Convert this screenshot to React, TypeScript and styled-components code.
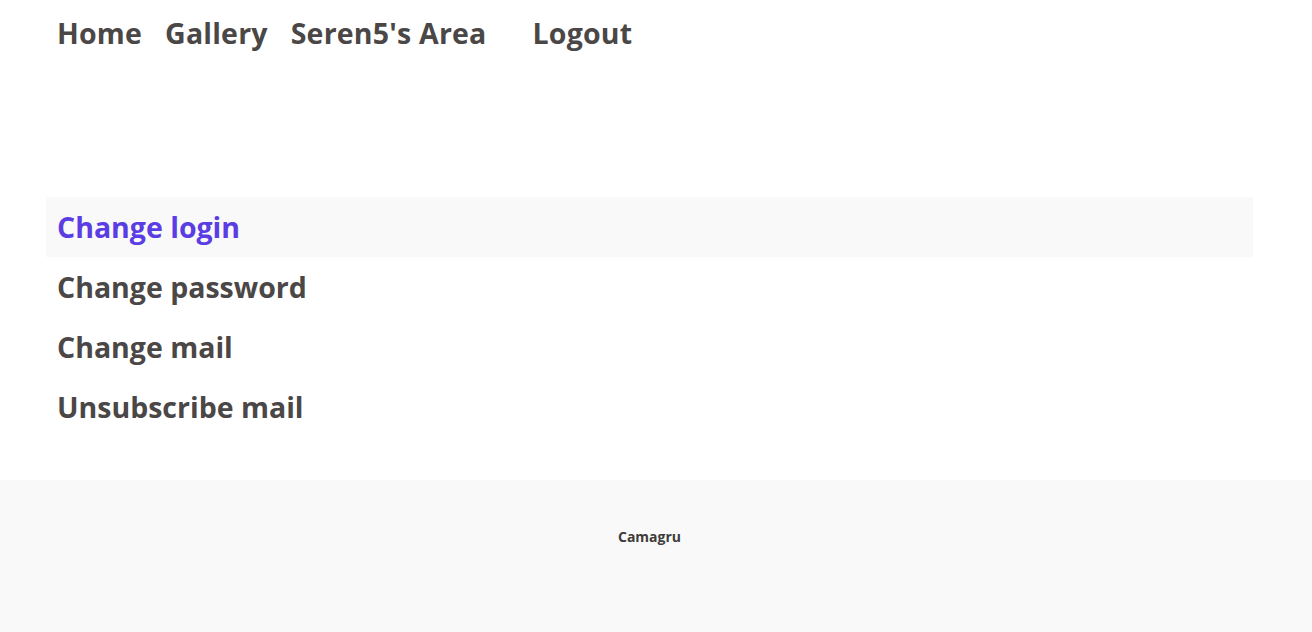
import React from "react";
import styled, { createGlobalStyle } from "styled-components";

const GlobalStyle = createGlobalStyle`
  html, body {
    margin: 0;
    padding: 0;
    background: #ffffff;
    font-family: "Open Sans", "Noto Sans", sans-serif;
    color: #4a4746;
  }
`;

const navLinks = ["Home", "Gallery", "Seren5's Area", "", "Logout"];
const settings = ["Change login", "Change password", "Change mail", "Unsubscribe mail"];

export default function App() {
  const active = 0;

  return (
    <>
      <GlobalStyle />
      <Page>
        <Nav>
          {navLinks.map((label, index) => (
            <NavItem key={index}>{label}</NavItem>
          ))}
        </Nav>

        <Main>
          <SettingsList>
            {settings.map((label, index) => (
              <SettingsItem key={label} $active={index === active}>
                {label}
              </SettingsItem>
            ))}
          </SettingsList>
        </Main>

        <Footer>
          <FooterTitle>Camagru</FooterTitle>
        </Footer>
      </Page>
    </>
  );
}

const Page = styled.div`
  display: flex;
  flex-direction: column;
  min-height: 632px;
`;

const Nav = styled.nav`
  display: flex;
  align-items: center;
  gap: 23px;
  height: 66px;
  padding-left: 57px;
`;

const NavItem = styled.a`
  font-size: 28.5px;
  font-weight: 700;
  letter-spacing: 0.2px;
  color: #4a4746;
  cursor: pointer;
  min-width: 0;
`;

const Main = styled.main`
  flex: 1;
  padding-top: 131px;
`;

const SettingsList = styled.ul`
  list-style: none;
  margin: 0 0 0 46px;
  padding: 0;
  width: 1207px;
`;

const SettingsItem = styled.li<{ $active: boolean }>`
  display: flex;
  align-items: center;
  height: 60px;
  padding-left: 11px;
  font-size: 28.5px;
  font-weight: 700;
  color: ${({ $active }) => ($active ? "#5b3de4" : "#4a4746")};
  background-color: ${({ $active }) => ($active ? "#f9f9f9" : "transparent")};
  cursor: pointer;
`;

const Footer = styled.footer`
  height: 152px;
  background: #f9f9f9;
  display: flex;
  justify-content: center;
  padding-top: 47px;
  padding-right: 13px;
  box-sizing: border-box;
`;

const FooterTitle = styled.p`
  margin: 0;
  font-size: 14px;
  font-weight: 700;
  color: #3f3c3b;
`;
